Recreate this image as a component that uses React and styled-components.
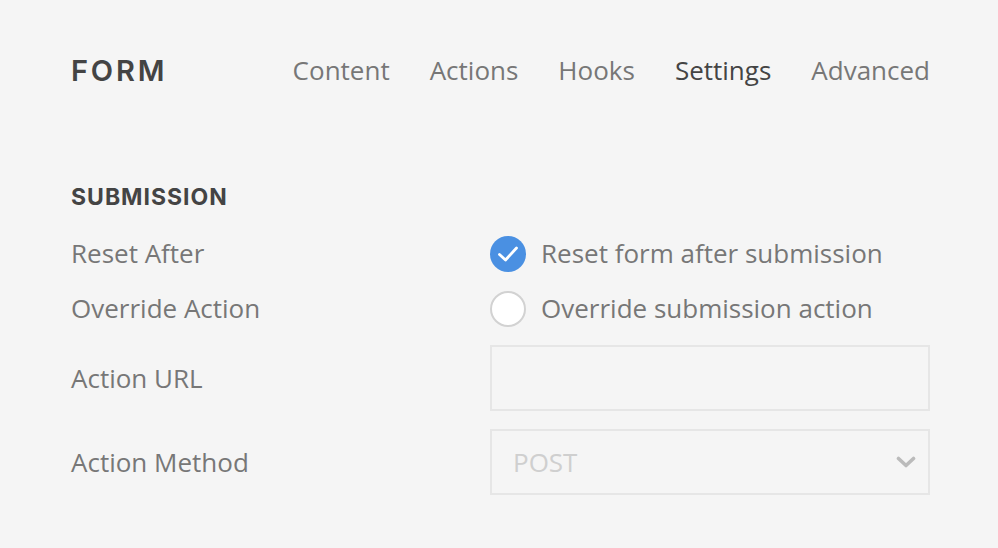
import React from "react";
import styled, { createGlobalStyle } from "styled-components";

const GlobalStyle = createGlobalStyle`
  html, body {
    margin: 0;
    padding: 0;
    background: #f5f5f5;
  }
  body {
    font-family: "Open Sans", "Liberation Sans", sans-serif;
  }
`;

const Page = styled.div`
  width: 998px;
  height: 548px;
  box-sizing: border-box;
  padding: 40px 68px 0 71px;
  overflow: hidden;
`;

const Header = styled.header`
  display: flex;
  align-items: center;
  justify-content: space-between;
  height: 60px;
`;

const Title = styled.h1`
  margin: 0;
  font-family: Inter, "Noto Sans", sans-serif;
  font-weight: 600;
  font-size: 29px;
  letter-spacing: 2.8px;
  color: #444;
`;

const Tabs = styled.nav`
  display: flex;
  gap: 40px;
`;

const Tab = styled.span`
  font-size: 26px;
  color: ${({ $active }) => ($active ? "#444" : "#777")};
  line-height: 1;
`;

const Section = styled.section`
  margin-top: 82px;
`;

const Heading = styled.h2`
  margin: 0 0 23px;
  font-family: Inter, "Noto Sans", sans-serif;
  font-weight: 700;
  font-size: 23px;
  line-height: 30px;
  letter-spacing: 1px;
  color: #444;
`;

const Grid = styled.div`
  display: grid;
  grid-template-columns: 419px 1fr;
  row-gap: 18px;
  align-items: center;
`;

const Label = styled.div`
  font-size: 26px;
  color: #777;
  line-height: 37px;
`;

const Check = styled.label`
  display: flex;
  align-items: center;
  gap: 15px;
  font-size: 26px;
  color: #777;
  line-height: 37px;
`;

const Circle = styled.span`
  width: 36px;
  height: 36px;
  box-sizing: border-box;
  border-radius: 50%;
  flex: none;
  display: flex;
  align-items: center;
  justify-content: center;
  background: ${({ $on }) => ($on ? "#4a90e2" : "#fff")};
  border: ${({ $on }) => ($on ? "none" : "2px solid #d2d2d2")};
`;

const Field = styled.div`
  height: 66px;
  box-sizing: border-box;
  border: 2px solid #e6e6e6;
  display: flex;
  align-items: center;
  justify-content: space-between;
  padding: 0 12px 0 21px;
  font-size: 26px;
  color: #cfcfcf;
`;

const tick = (
  <svg width="24" height="20" viewBox="0 0 24 20" fill="none">
    <path d="M3.5 10.5 L9.5 16 L20.5 4" stroke="#fff" strokeWidth="2.8" strokeLinecap="round" strokeLinejoin="round" />
  </svg>
);

const chevron = (
  <svg width="20" height="12" viewBox="0 0 20 12" fill="none">
    <path d="M2.5 2.5 L10 9.5 L17.5 2.5" stroke="#bbb" strokeWidth="3.6" strokeLinecap="round" strokeLinejoin="round" />
  </svg>
);

export default function App() {
  const tabs = ["Content", "Actions", "Hooks", "Settings", "Advanced"];
  return (
    <Page>
      <GlobalStyle />
      <Header>
        <Title>FORM</Title>
        <Tabs>
          {tabs.map((t) => (
            <Tab key={t} $active={t === "Settings"}>
              {t}
            </Tab>
          ))}
        </Tabs>
      </Header>
      <Section>
        <Heading>SUBMISSION</Heading>
        <Grid>
          <Label>Reset After</Label>
          <Check>
            <Circle $on>{tick}</Circle>
            Reset form after submission
          </Check>
          <Label>Override Action</Label>
          <Check>
            <Circle />
            Override submission action
          </Check>
          <Label>Action URL</Label>
          <Field />
          <Label>Action Method</Label>
          <Field>
            POST
            {chevron}
          </Field>
        </Grid>
      </Section>
    </Page>
  );
}
